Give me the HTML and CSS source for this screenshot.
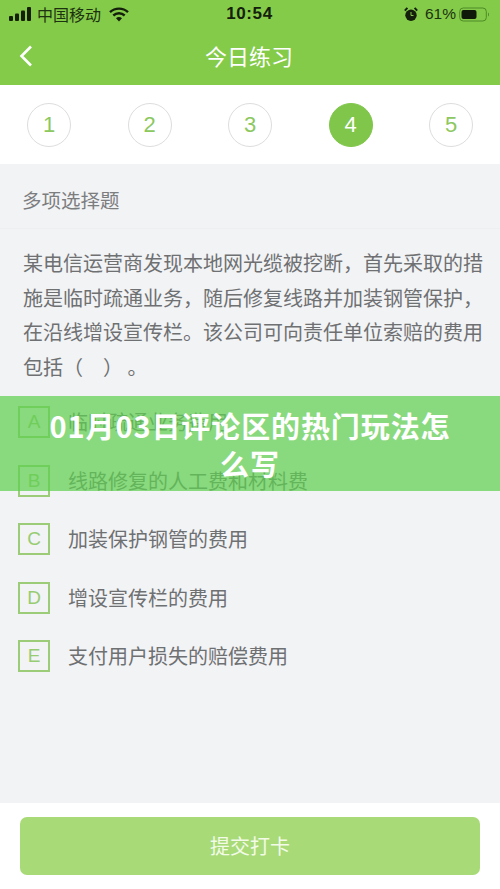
FILE: index.html
```html
<!DOCTYPE html>
<html lang="zh-CN">
<head>
<meta charset="utf-8">
<title>今日练习</title>
<link rel="stylesheet" href="styles.css">
</head>
<body>
<div class="page">
  <header class="head">
    <div class="status">
      <div class="status-side">
        <svg class="signal" width="23" height="14" viewBox="0 0 23 14"><rect x="0" y="9" width="4" height="5" rx="1"/><rect x="6" y="6.500" width="4" height="7.500" rx="1"/><rect x="12" y="3.500" width="4" height="10.500" rx="1"/><rect x="18" y="0" width="4" height="14" rx="1"/></svg>
        <span class="carrier">中国移动</span>
        <svg class="wifi" width="20" height="15" viewBox="0 0 20 15"><path d="M1 5.200a13 13 0 0 1 18 0" /><path d="M4.300 8.500a8.400 8.400 0 0 1 11.400 0"/><path class="wifi-tip" d="M10 14.500l-3-3.300a4.200 4.200 0 0 1 6 0z"/></svg>
      </div>
      <div class="time">10:54</div>
      <div class="status-side status-right">
        <svg class="alarm" width="14" height="15" viewBox="0 0 14 15"><circle cx="7" cy="8.300" r="5.700" fill="#14200c"/><path d="M7 5v3.500h2.500" fill="none" stroke="#84c94a" stroke-width="1"/><path d="M.8 3.600L3.400.9M13.200 3.600L10.600.9" stroke="#14200c" stroke-width="2"/></svg>
        <span class="pct">61%</span>
        <svg width="31" height="15" viewBox="0 0 31 15"><rect x=".7" y="1" width="26.600" height="13" rx="3.500" fill="none" stroke="#4f8a26" stroke-width="1"/><rect x="2.500" y="3" width="15" height="9" rx="2" fill="#0f1a08"/><path d="M29 5.500c1.300.5 1.300 3.500 0 4z" fill="#4f8a26"/></svg>
      </div>
    </div>
    <div class="nav">
      <svg class="back" width="14" height="22" viewBox="0 0 14 22"><path d="M12 1.500L2.500 11l9.500 9.500"/></svg>
      <h1 class="nav-title">今日练习</h1>
    </div>
  </header>

  <nav class="steps">
    <span class="step">1</span>
    <span class="step">2</span>
    <span class="step">3</span>
    <span class="step step-on">4</span>
    <span class="step">5</span>
  </nav>

  <main class="body">
    <div class="kind">多项选择题</div>
    <p class="question">某电信运营商发现本地网光缆被挖断，首先采取的措施是临时疏通业务，随后修复线路并加装钢管保护，在沿线增设宣传栏。该公司可向责任单位索赔的费用包括（　） 。</p>
    <ul class="options">
      <li class="option"><span class="letter">A</span><span>临时疏通业务费用</span></li>
      <li class="option"><span class="letter">B</span><span>线路修复的人工费和材料费</span></li>
      <li class="option"><span class="letter">C</span><span>加装保护钢管的费用</span></li>
      <li class="option"><span class="letter">D</span><span>增设宣传栏的费用</span></li>
      <li class="option"><span class="letter">E</span><span>支付用户损失的赔偿费用</span></li>
    </ul>
  </main>

  <footer class="foot">
    <button class="submit" type="button">提交打卡</button>
  </footer>

  <div class="banner">
    <div class="banner-text">01月03日评论区的热门玩法怎么写</div>
  </div>
</div>
</body>
</html>
```
FILE: styles.css
```css
* { box-sizing: border-box; }
html, body { margin: 0; padding: 0; }
body {
  width: 500px;
  height: 889px;
  overflow: hidden;
  font-family: "Noto Sans CJK SC", "Liberation Sans", sans-serif;
}
.page {
  position: relative;
  width: 500px;
  height: 889px;
  display: flex;
  flex-direction: column;
  background: #f2f3f5;
}
.head { height: 85px; background: #84cb4a; flex: none; }
.status {
  height: 28px;
  padding: 0 10px 0 9px;
  display: grid;
  grid-template-columns: 1fr auto 1fr;
  align-items: center;
  color: #14200c;
}
.status-side { display: flex; align-items: center; gap: 5px; }
.status-right { justify-content: flex-end; gap: 6px; }
.alarm { margin-right: 1px; }
.signal { fill: #14200c; }
.carrier { font-size: 16px; line-height: 28px; letter-spacing: 0; color: #1d3210; }
.wifi { margin-left: 3px; fill: none; stroke: #14200c; stroke-width: 2.400; }
.wifi-tip { fill: #14200c; stroke: none; }
.time { font-family: "Liberation Sans", sans-serif; font-size: 17px; font-weight: 700; letter-spacing: .6px; }
.pct { font-family: "Liberation Sans", sans-serif; font-size: 15.500px; margin-right: -3px; color: #1d3210; }
.nav {
  position: relative;
  height: 57px;
  display: flex;
  align-items: center;
  justify-content: center;
}
.back {
  position: absolute;
  left: 19px;
  top: 17px;
  fill: none;
  stroke: #fff;
  stroke-width: 2.600;
}
.nav-title {
  margin: -3px 0 0 -2px;
  font-size: 22px;
  font-weight: 400;
  color: #fff;
  letter-spacing: 0;
}
.steps {
  height: 79px;
  flex: none;
  background: #fff;
  padding: 18px 27px 0;
  display: flex;
  justify-content: space-between;
}
.step {
  width: 44px;
  height: 44px;
  border: 1px solid #dcdedc;
  border-radius: 50%;
  display: flex;
  align-items: center;
  justify-content: center;
  font-family: "Liberation Sans", sans-serif;
  font-size: 22px;
  color: #8cc860;
}
.step-on { background: #7fc64a; border-color: #7fc64a; color: #fff; }
.body { flex: 1; min-height: 0; }
.kind {
  height: 65px;
  padding: 18px 0 0 22px;
  font-size: 19.500px;
  line-height: 36px;
  color: #7b7d7f;
  border-bottom: 1px solid #eeeff1;
}
.question {
  margin: 17px 0 0;
  padding: 0 16px 0 23px;
  font-size: 20px;
  line-height: 34.500px;
  color: #6e7072;
}
.options { list-style: none; margin: 22px 0 0; padding: 0 0 0 18px; }
.option {
  height: 58.500px;
  display: flex;
  align-items: flex-start;
  gap: 18px;
  font-size: 20px;
  line-height: 32px;
  color: #6e7072;
}
.letter {
  width: 32px;
  height: 32px;
  border: 2px solid #9ccc78;
  display: flex;
  align-items: center;
  justify-content: center;
  font-family: "Liberation Sans", sans-serif;
  font-size: 19px;
  color: #97cc72;
}
.foot {
  height: 86px;
  flex: none;
  background: #fff;
  padding: 14px 20px 0;
}
.submit {
  width: 100%;
  height: 58px;
  border: 0;
  border-radius: 7px;
  background: #a8da78;
  color: #f3fbe8;
  font-family: inherit;
  font-size: 20px;
  padding: 0 0 2px;
}
.banner {
  position: absolute;
  left: 0;
  right: 0;
  top: 396px;
  height: 95px;
  background: rgba(96, 207, 81, .72);
  display: flex;
  justify-content: center;
  padding: 10px 48px 0;
}
.banner-text {
  text-align: center;
  font-size: 29px;
  line-height: 38px;
  font-weight: 700;
  letter-spacing: .9px;
  color: #fff;
}
```
